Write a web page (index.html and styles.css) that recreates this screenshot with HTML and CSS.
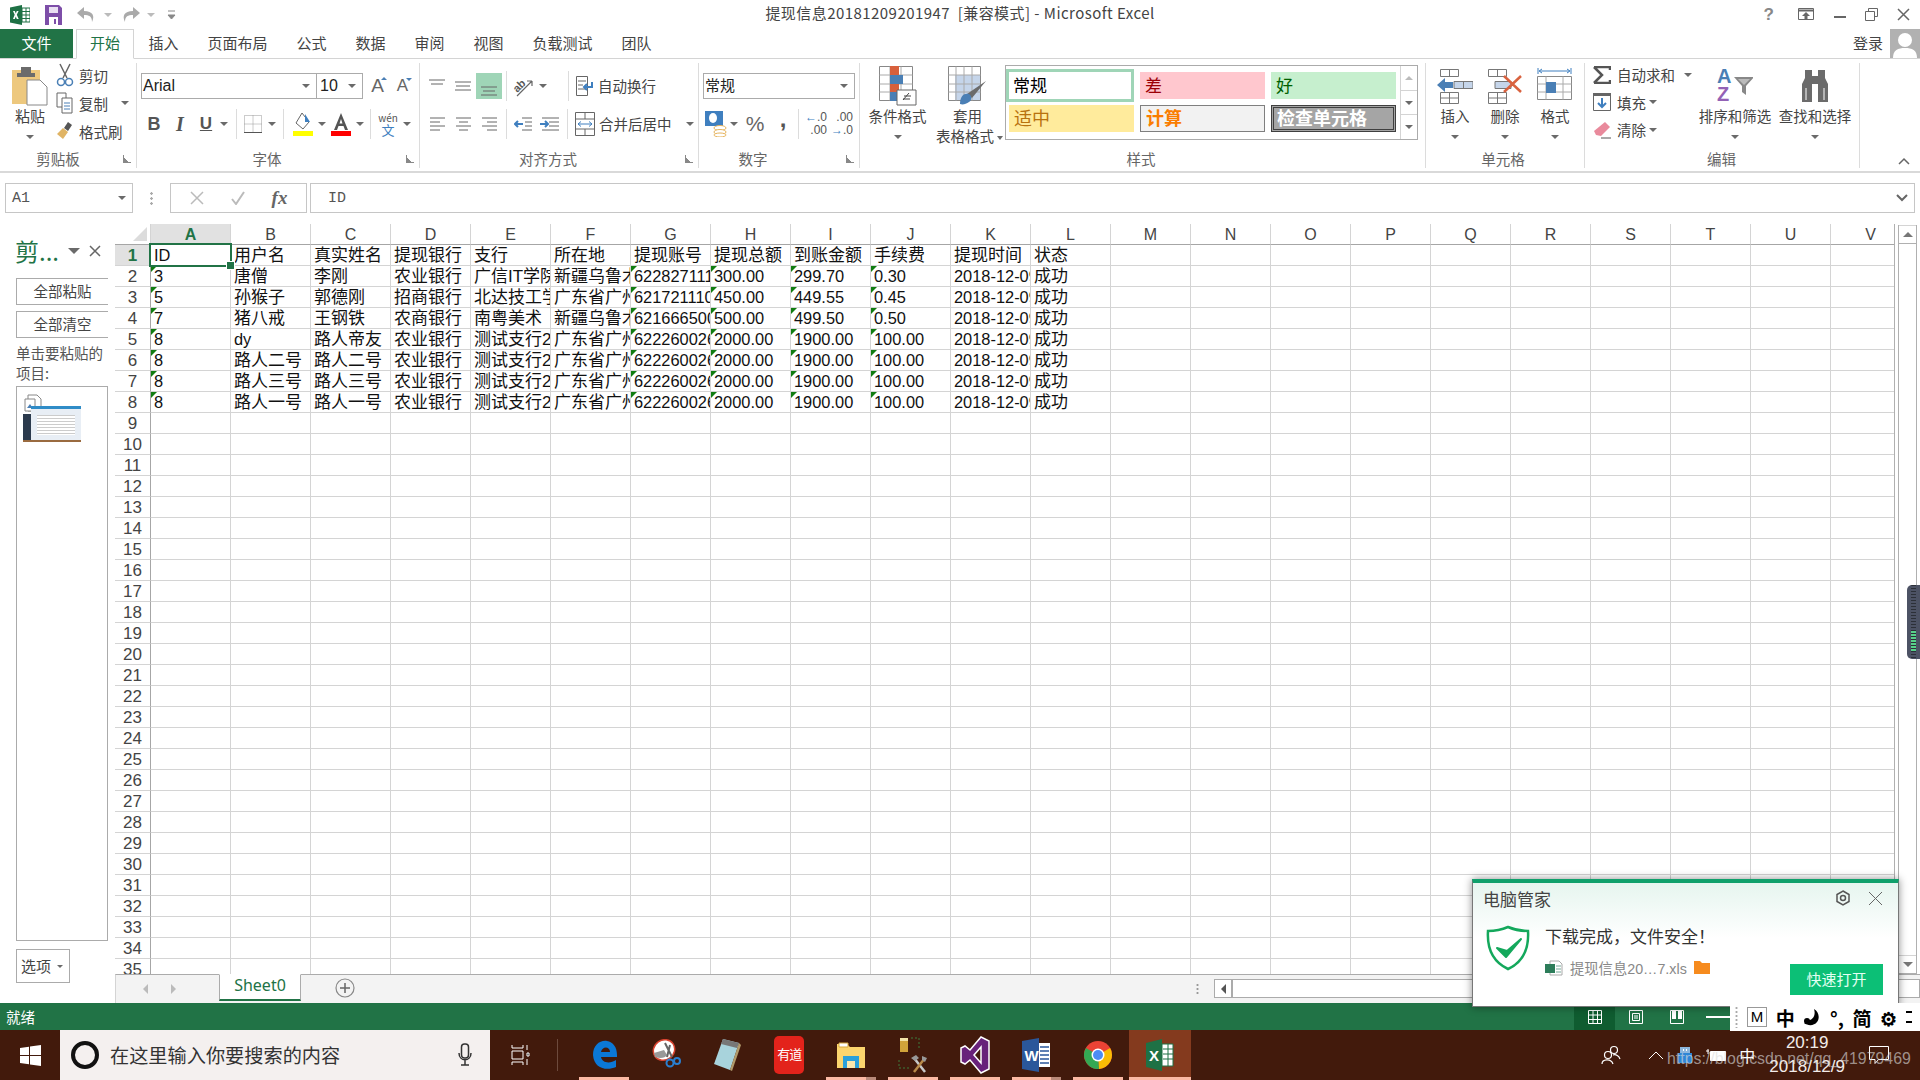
FILE: index.html
```html
<!DOCTYPE html>
<html lang="zh-CN">
<head>
    <meta charset="UTF-8">
    <title>提现信息20181209201947 [兼容模式] - Microsoft Excel</title>
    <link rel="stylesheet" href="styles.css">
</head>
<body>
<svg class="defs" width="0" height="0">
    <symbol id="xl" viewBox="0 0 20 20"><path d="M0 2.5 12 0v20L0 17.5z" fill="#1e7145"/><path d="M12 3h8v14h-8z" fill="#fff" stroke="#1e7145"/><path d="M12 6.5h8M12 10h8M12 13.5h8M16 3v14" stroke="#1e7145"/><path d="M3 6l1.7 3.7L3 14h1.8l1-2.6 1 2.6h1.9L6.8 9.7 8.600 6H6.800l-1 2.400L4.800 6z" fill="#fff"/></symbol>
    <symbol id="lines-t" viewBox="0 0 20 20"><path d="M2 4h16M4 8h12" stroke="#666" fill="none"/></symbol>
    <symbol id="lines-m" viewBox="0 0 20 20"><path d="M2 6h16M3 10h14M2 14h16" stroke="#666" fill="none"/></symbol>
    <symbol id="lines-b" viewBox="0 0 20 20"><path d="M2 11h16M4 15h12M2 19h16" stroke="#666" fill="none"/></symbol>
    <symbol id="al-l" viewBox="0 0 20 20"><path d="M3 4h15M3 8h10M3 12h15M3 16h10" stroke="#666" fill="none"/></symbol>
    <symbol id="al-c" viewBox="0 0 20 20"><path d="M3 4h15M6 8h9M3 12h15M6 16h9" stroke="#666" fill="none"/></symbol>
    <symbol id="al-r" viewBox="0 0 20 20"><path d="M3 4h15M8 8h10M3 12h15M8 16h10" stroke="#666" fill="none"/></symbol>
</svg>

<header class="titlebar">
    <div class="qat">
        <svg class="qat-logo" width="20" height="20"><use href="#xl"/></svg>
        <svg class="qat-save" width="17" height="22" viewBox="0 0 17 22"><path d="M0 1h14l3 3v17H0z" fill="#7d4ea8"/><path d="M4 3h9v6H4z" fill="#e9dff2"/><path d="M4 13h9v8H4z" fill="#fff"/><path d="M9 15h2v5H9z" fill="#7d4ea8"/></svg>
        <svg class="qat-undo" width="22" height="18" viewBox="0 0 22 18"><path d="M8 1 1 7l7 6V9c5 0 8 1 8 7 3-6 1-11-8-11z" fill="#aaa"/></svg>
        <span class="caret faint"></span>
        <svg class="qat-redo" width="22" height="18" viewBox="0 0 22 18"><path d="M14 1l7 6-7 6V9c-5 0-8 1-8 7-3-6-1-11 8-11z" fill="#aaa"/></svg>
        <span class="caret faint"></span>
        <svg class="qat-more" width="9" height="10" viewBox="0 0 9 10"><path d="M1 1h7M1 5h7l-3.5 4z" stroke="#888" fill="#888"/></svg>
    </div>
    <div class="doc-title">提现信息20181209201947&nbsp; [兼容模式] - Microsoft Excel</div>
    <div class="win-btns">
        <span class="help">?</span>
        <svg width="16" height="13" viewBox="0 0 16 13"><path d="M.5.5h15v11H.5z" fill="none" stroke="#666"/><path d="M.5 2.5h15" stroke="#666" stroke-width="2"/><path d="M8 4l-4 4h2.500v4h3V8H12z" fill="#666"/></svg>
        <svg width="13" height="13" viewBox="0 0 13 13"><path d="M1 9h12" stroke="#666" stroke-width="2"/></svg>
        <svg width="13" height="13" viewBox="0 0 13 13"><path d="M3.5 3V.5h9v8H10M.5 3.5h9v9h-9z" fill="none" stroke="#666"/></svg>
        <svg width="13" height="13" viewBox="0 0 13 13"><path d="M1 1l11 11M12 1 1 12" stroke="#666" stroke-width="1.5"/></svg>
    </div>
</header>

<nav class="tabs">
    <span class="tab-file">文件</span>
    <span class="tab active">开始</span>
    <span class="tab">插入</span>
    <span class="tab">页面布局</span>
    <span class="tab">公式</span>
    <span class="tab">数据</span>
    <span class="tab">审阅</span>
    <span class="tab">视图</span>
    <span class="tab">负载测试</span>
    <span class="tab">团队</span>
    <span class="login">登录</span>
    <span class="avatar">
        <svg width="30" height="29" viewBox="0 0 30 29"><circle cx="15" cy="11" r="7" fill="#fff"/><path d="M3 29c0-8 5-10 12-10s12 2 12 10z" fill="#fff"/></svg>
    </span>
</nav>

<section class="ribbon">
    <!-- 剪贴板 -->
    <div class="group g-clip">
        <div class="group-body">
            <div class="big paste">
                <svg width="36" height="40" viewBox="0 0 36 40"><path d="M0 4h28v34H0z" fill="#edc87e"/><path d="M9 1h10v6h4v4H5V7h4z" fill="#6b6b6b"/><path d="M15 14h13l7 7v18H15z" fill="#fff" stroke="#888"/></svg>
                <span class="big-text">粘贴</span>
                <span class="caret big-caret"></span>
            </div>
            <div class="small-col">
                <div class="small-row">
                    <svg width="18" height="24" viewBox="0 0 18 24"><path d="M4 1l7 14M14 1 7 15" stroke="#666" stroke-width="1.5"/><circle cx="5" cy="19" r="3.5" fill="none" stroke="#4a7fb5" stroke-width="1.5"/><circle cx="13" cy="19" r="3.5" fill="none" stroke="#4a7fb5" stroke-width="1.5"/></svg>
                    <span>剪切</span>
                </div>
                <div class="small-row">
                    <svg width="18" height="24" viewBox="0 0 18 24"><path d="M1 2h9v14H1z" fill="#fff" stroke="#666"/><path d="M6 7h10v15H6z" fill="#fff" stroke="#666"/><path d="M8 12h6M8 15h6M8 18h6" stroke="#4a7fb5"/></svg>
                    <span>复制</span><span class="caret tail"></span>
                </div>
                <div class="small-row">
                    <svg width="18" height="22" viewBox="0 0 18 22"><path d="M12 2l4 3-4 6-4-3z" fill="#555"/><path d="M7 8l5 4-5 7-6-5z" fill="#e0b465"/></svg>
                    <span>格式刷</span>
                </div>
            </div>
        </div>
        <div class="group-foot"><i></i><span>剪贴板</span><b class="launcher"></b></div>
    </div>

    <!-- 字体 -->
    <div class="group g-font">
        <div class="group-body column">
            <div class="row-1">
                <div class="combo font-name">Arial<span class="caret"></span></div>
                <div class="combo font-size">10<span class="caret"></span></div>
                <span class="grow-a">A<i class="up"></i></span>
                <span class="grow-a small-a">A<i class="down"></i></span>
            </div>
            <div class="row-2">
                <span class="t glyph bold">B</span>
                <span class="t glyph ital">I</span>
                <span class="t glyph under">U</span>
                <span class="caret w10"></span>
                <span class="vsep sep-font-1"></span>
                <span class="t"><svg width="18" height="18" viewBox="0 0 18 18"><path d="M.5.5h17v17H.5z" fill="none" stroke="#999" stroke-dasharray="1 1"/><path d="M9 .5v17M.5 9h17" stroke="#999" stroke-dasharray="1 1"/><path d="M0 17.5h18" stroke="#555"/></svg></span>
                <span class="caret w12"></span>
                <span class="vsep sep-font-2"></span>
                <span class="t"><svg width="22" height="24" viewBox="0 0 22 24"><path d="M10 1l7 9-6 7-7-6z" fill="#fff" stroke="#666"/><path d="M13 2l5 8h-5z" fill="#3f7fbf"/><path d="M1 19h20v5H1z" fill="#ff0"/></svg></span>
                <span class="caret w12"></span>
                <span class="t"><svg width="22" height="24" viewBox="0 0 22 24"><path d="M11 1 4 18h3l1.500-4h5L15 18h3zM9.500 11.500 11 7l1.500 4.500z" fill="#555"/><path d="M1 19h20v5H1z" fill="#f00"/></svg></span>
                <span class="caret w12"></span>
                <span class="vsep sep-font-3"></span>
                <span class="t wen"><small>wén</small><b>文</b></span>
                <span class="caret w12"></span>
            </div>
        </div>
        <div class="group-foot foot-font"><i></i><span>字体</span><b class="launcher"></b></div>
    </div>

    <!-- 对齐方式 -->
    <div class="group g-align">
        <div class="group-body column">
            <div class="row-1 align-row">
                <span class="t"><svg width="20" height="20"><use href="#lines-t"/></svg></span>
                <span class="t"><svg width="20" height="20"><use href="#lines-m"/></svg></span>
                <span class="t on"><svg width="20" height="20"><use href="#lines-b"/></svg></span>
                <span class="vsep short"></span>
                <span class="t"><svg width="24" height="24" viewBox="0 0 24 24"><text class="orient-ab" x="1" y="15" transform="rotate(-45 8 12)">ab</text><path d="M5 22 20 7M20 7h-5M20 7v5" fill="none" stroke="#666" stroke-width="1.2"/></svg></span>
                <span class="caret w12"></span>
                <span class="vsep short sep-wrap"></span>
                <span class="cmd"><svg width="18" height="22" viewBox="0 0 18 22"><path d="M.5 1.5h11v19H.5z" fill="#fff" stroke="#666"/><path d="M2 6h8M2 10h5M2 14h8" stroke="#666"/><path d="M16 7v5H8m3-3-3 3 3 3" stroke="#3f7fbf" stroke-width="2" fill="none"/></svg><span>自动换行</span></span>
            </div>
            <div class="row-2 align-row">
                <span class="t"><svg width="20" height="20"><use href="#al-l"/></svg></span>
                <span class="t"><svg width="20" height="20"><use href="#al-c"/></svg></span>
                <span class="t"><svg width="20" height="20"><use href="#al-r"/></svg></span>
                <span class="vsep short"></span>
                <span class="t"><svg width="20" height="16" viewBox="0 0 20 16"><path d="M8 2h10M11 6h7M11 10h7M8 14h10" stroke="#666"/><path d="M9 8H1m3-3L1 8l3 3" stroke="#3f7fbf" stroke-width="2" fill="none"/></svg></span>
                <span class="t"><svg width="20" height="16" viewBox="0 0 20 16"><path d="M2 2h17M9 6h10M9 10h10M2 14h17" stroke="#666"/><path d="M0 8h8M5 5l3 3-3 3" stroke="#3f7fbf" stroke-width="2" fill="none"/></svg></span>
                <span class="vsep short"></span>
                <span class="cmd merge"><svg width="20" height="24" viewBox="0 0 20 24"><path d="M.5.5h19v23H.5z" fill="#fff" stroke="#666"/><path d="M.5 7h19M.5 17h19M10 1v6M10 17v6" stroke="#666"/><path d="M3 12h14M6 9.500 3 12l3 2.500M14 9.500l3 2.500-3 2.500" stroke="#3f7fbf" fill="none"/></svg><span>合并后居中</span><span class="caret tail"></span></span>
            </div>
        </div>
        <div class="group-foot foot-align"><i></i><span>对齐方式</span><b class="launcher"></b></div>
    </div>

    <!-- 数字 -->
    <div class="group g-num">
        <div class="group-body column">
            <div class="row-1"><div class="combo num-fmt">常规<span class="caret"></span></div></div>
            <div class="row-2">
                <span class="t"><svg width="22" height="26" viewBox="0 0 22 26"><path d="M0 0h18v15H0z" fill="#3f7fbf"/><ellipse cx="8" cy="7" rx="4" ry="5" fill="#fff"/><ellipse cx="15" cy="17" rx="6" ry="2.500" fill="#fff" stroke="#e6b45e"/><ellipse cx="15" cy="21" rx="6" ry="2.500" fill="#fff" stroke="#e6b45e"/><ellipse cx="15" cy="24" rx="6" ry="2" fill="#fff" stroke="#e6b45e"/></svg></span>
                <span class="caret w10"></span>
                <span class="t glyph pct">%</span>
                <span class="t glyph comma">,</span>
                <span class="vsep sep-num"></span>
                <span class="t dec"><span><i class="arrow">←</i>.0</span><span>.00</span></span>
                <span class="t dec"><span>.00</span><span><i class="arrow">→</i>.0</span></span>
            </div>
        </div>
        <div class="group-foot foot-num"><i></i><span>数字</span><b class="launcher"></b></div>
    </div>

    <!-- 样式 -->
    <div class="group g-style">
        <div class="group-body">
            <div class="big cond">
                <svg width="38" height="40" viewBox="0 0 38 40"><path d="M.5.5h33v34H.5z" fill="#fff" stroke="#888"/><path d="M11 .5v34M22 .5v34M.5 9h33M.5 18h33M.5 26h33" stroke="#aaa"/><path d="M11 0h9v9h-9zM11 18h9v8h-9z" fill="#d8603c"/><path d="M11 9h13v9H11zM11 26h9v9h-9z" fill="#4a7fb5"/><path d="M18 24h19v15H18z" fill="#fff" stroke="#666"/><path d="M24 34l6-7M25 30h7M24 33h7" stroke="#444"/></svg>
                <span class="big-text">条件格式</span>
                <span class="caret big-caret"></span>
            </div>
            <div class="big table-fmt">
                <svg width="40" height="40" viewBox="0 0 40 40"><path d="M.5.5h32v34H.5z" fill="#fff" stroke="#888"/><path d="M7 9h25v25H7z" fill="#c5d5ea"/><path d="M8 .5v34M16 .5v34M24 .5v34M.5 9h32M.5 18h32M.5 26h32" stroke="#aaa"/><path d="M38 15 24 32l-5-4z" fill="#6b6b6b"/><path d="M12 38c0-8 4-11 9-10 3 2 3 6 0 8-3 2-6 3-9 2z" fill="#4a7fb5"/></svg>
                <span class="big-text">套用</span>
                <span class="big-text">表格格式<span class="caret tail-s"></span></span>
            </div>
            <div class="gallery">
                <div class="cell-styles">
                    <span class="cs cs-normal">常规</span>
                    <span class="cs cs-bad">差</span>
                    <span class="cs cs-good">好</span>
                    <span class="cs cs-neutral">适中</span>
                    <span class="cs cs-calc">计算</span>
                    <span class="cs cs-check">检查单元格</span>
                </div>
                <div class="gallery-scroll">
                    <span><i class="caret-up"></i></span>
                    <span><i class="caret"></i></span>
                    <span><i class="caret more"></i></span>
                </div>
            </div>
        </div>
        <div class="group-foot plain foot-style"><span>样式</span></div>
    </div>

    <!-- 单元格 -->
    <div class="group g-cells">
        <div class="group-body">
            <div class="big col50">
                <svg width="36" height="36" viewBox="0 0 36 36"><path d="M3.5 1.500h18v7h-18zM12.500 1.500v7M3.500 24.500h18v11h-18zM12.500 24.500v11M3.500 30h18" fill="#fff" stroke="#777"/><path d="M17 13.500h19v7H17z" fill="#c5d5ea" stroke="#777"/><path d="M26.500 13.500v7" stroke="#777"/><path d="M0 17l8-7v4h8v6H8v4z" fill="#4a7fb5"/></svg>
                <span class="big-text">插入</span>
                <span class="caret big-caret"></span>
            </div>
            <div class="big col50">
                <svg width="36" height="36" viewBox="0 0 36 36"><path d="M1.5 1.500h18v7h-18zM10.500 1.500v7M1.500 24.500h18v11h-18zM10.500 24.500v11M1.500 30h18" fill="#fff" stroke="#777"/><path d="M8 13.500h16v7H8z" fill="#c5d5ea" stroke="#777"/><path d="M17 8 34 24M34 8 17 24" stroke="#d9623f" stroke-width="2.5"/></svg>
                <span class="big-text">删除</span>
                <span class="caret big-caret"></span>
            </div>
            <div class="big col50">
                <svg width="36" height="36" viewBox="0 0 36 36"><path d="M1 0v6M34 0v6M3 3h29M5 1 2 3l3 2M30 1l3 2-3 2" stroke="#3f7fbf" fill="none"/><path d="M.5 8.500h34v23H.5z" fill="#fff" stroke="#888"/><path d="M9 8.500v23M26 8.500v23M.5 16h34M.5 24h34" stroke="#aaa"/><path d="M9 14h10v11H9z" fill="#4a7fb5"/></svg>
                <span class="big-text">格式</span>
                <span class="caret big-caret"></span>
            </div>
        </div>
        <div class="group-foot plain foot-cells"><span>单元格</span></div>
    </div>

    <!-- 编辑 -->
    <div class="group g-edit">
        <div class="group-body">
            <div class="small-col edit-col">
                <div class="small-row">
                    <svg width="18" height="18" viewBox="0 0 18 18"><path d="M1 1h16v3M1 17h16v-3M1 1l8 8-8 8" fill="none" stroke="#555" stroke-width="2.5"/></svg>
                    <span>自动求和</span><span class="caret tail"></span>
                </div>
                <div class="small-row">
                    <svg width="18" height="18" viewBox="0 0 18 18"><path d="M.5.5h17v17H.5z" fill="#fff" stroke="#666"/><path d="M0 0h18v3H0z" fill="#666"/><path d="M9 5v9M5 10l4 4 4-4" stroke="#3f7fbf" stroke-width="2" fill="none"/></svg>
                    <span>填充</span><span class="caret inline"></span>
                </div>
                <div class="small-row">
                    <svg width="18" height="18" viewBox="0 0 18 18"><path d="M12 1l5 5-9 9-5-1-2-4z" fill="#e98a9c"/><path d="M8 17h10" stroke="#555"/></svg>
                    <span>清除</span><span class="caret inline"></span>
                </div>
            </div>
            <div class="big col80">
                <svg width="36" height="36" viewBox="0 0 36 36"><path d="M17 9h20l-8 9v9l-4-3v-6z" fill="#888"/><path d="M21 11h12l-6 6z" fill="#bbb"/></svg>
                <span class="sort-letters"><b class="az-a">A</b><b class="az-z">Z</b></span>
                <span class="big-text">排序和筛选</span>
                <span class="caret big-caret"></span>
            </div>
            <div class="big col80">
                <svg width="34" height="32" viewBox="0 0 34 32"><path d="M7 0h7v6h6V0h7v8l3 6v18H20V14h-6v18H4V14l3-6z" fill="#6b6b6b"/><path d="M8 18v12M26 18v12" stroke="#fff"/></svg>
                <span class="big-text">查找和选择</span>
                <span class="caret big-caret"></span>
            </div>
        </div>
        <div class="group-foot plain foot-edit"><span>编辑</span></div>
    </div>

    <svg class="collapse" width="12" height="8" viewBox="0 0 12 8"><path d="M1 7l5-5 5 5" fill="none" stroke="#666" stroke-width="1.5"/></svg>
</section>

<div class="formula-bar">
    <div class="name-box">A1<span class="caret"></span></div>
    <div class="fx-dots"></div>
    <div class="fx-btns">
        <svg width="14" height="14" viewBox="0 0 14 14"><path d="M1 1l12 12M13 1 1 13" stroke="#bbb" stroke-width="1.5"/></svg>
        <svg width="14" height="14" viewBox="0 0 14 14"><path d="M1 8l4 5 8-12" fill="none" stroke="#bbb" stroke-width="2"/></svg>
        <span class="fx">fx</span>
    </div>
    <div class="fx-input">ID
        <svg width="12" height="8" viewBox="0 0 12 8"><path d="M1 1l5 5 5-5" fill="none" stroke="#666" stroke-width="2"/></svg>
    </div>
</div>

<main class="workspace">
    <aside class="clip-pane">
        <div class="pane-head">
            <span class="pane-title">剪...</span>
            <span class="caret pane-caret"></span>
            <svg width="12" height="12" viewBox="0 0 12 12"><path d="M1 1l10 10M11 1 1 11" stroke="#666" stroke-width="1.5"/></svg>
        </div>
        <div class="pane-btn">全部粘贴</div>
        <div class="pane-btn">全部清空</div>
        <p class="pane-tip">单击要粘贴的<br>项目:</p>
        <div class="pane-list">
            <svg class="thumb-icon" width="18" height="20" viewBox="0 0 18 20"><path d="M4 1h9l4 4v12H4z" fill="#fff" stroke="#888"/><path d="M1 5h10v12H1z" fill="#fff" stroke="#888"/><path d="M3 14l3-4 2 3 1-1 2 2z" fill="#4a7fb5"/></svg>
            <div class="thumb"><div class="thumb-left"></div><div class="thumb-main"></div></div>
        </div>
        <div class="pane-options">选项<span class="caret"></span></div>
    </aside>

    <div class="sheet-wrap">
        <div class="sheet-scroll">
            <div class="sheet">
                <div class="ch corner"></div>
                <div class="ch sel">A</div><div class="ch">B</div><div class="ch">C</div><div class="ch">D</div><div class="ch">E</div><div class="ch">F</div><div class="ch">G</div><div class="ch">H</div><div class="ch">I</div><div class="ch">J</div><div class="ch">K</div><div class="ch">L</div><div class="ch">M</div><div class="ch">N</div><div class="ch">O</div><div class="ch">P</div><div class="ch">Q</div><div class="ch">R</div><div class="ch">S</div><div class="ch">T</div><div class="ch">U</div><div class="ch">V</div>

                <div class="rh sel">1</div>
                <div class="c active d">ID</div><div class="c">用户名</div><div class="c">真实姓名</div><div class="c">提现银行</div><div class="c">支行</div><div class="c">所在地</div><div class="c">提现账号</div><div class="c">提现总额</div><div class="c">到账金额</div><div class="c">手续费</div><div class="c">提现时间</div><div class="c">状态</div>

                <div class="rh">2</div>
                <div class="c n">3</div><div class="c">唐僧</div><div class="c">李刚</div><div class="c">农业银行</div><div class="c">广信IT学院</div><div class="c">新疆乌鲁木齐</div><div class="c n">6228271117</div><div class="c n">300.00</div><div class="c n">299.70</div><div class="c n">0.30</div><div class="c d">2018-12-09</div><div class="c">成功</div>

                <div class="rh">3</div>
                <div class="c n">5</div><div class="c">孙猴子</div><div class="c">郭德刚</div><div class="c">招商银行</div><div class="c">北达技工学校</div><div class="c">广东省广州</div><div class="c n">6217211100</div><div class="c n">450.00</div><div class="c n">449.55</div><div class="c n">0.45</div><div class="c d">2018-12-09</div><div class="c">成功</div>

                <div class="rh">4</div>
                <div class="c n">7</div><div class="c">猪八戒</div><div class="c">王钢铁</div><div class="c">农商银行</div><div class="c">南粤美术</div><div class="c">新疆乌鲁木齐</div><div class="c n">6216665000</div><div class="c n">500.00</div><div class="c n">499.50</div><div class="c n">0.50</div><div class="c d">2018-12-09</div><div class="c">成功</div>

                <div class="rh">5</div>
                <div class="c n">8</div><div class="c d">dy</div><div class="c">路人帝友</div><div class="c">农业银行</div><div class="c">测试支行2</div><div class="c">广东省广州</div><div class="c n">6222600260</div><div class="c n">2000.00</div><div class="c n">1900.00</div><div class="c n">100.00</div><div class="c d">2018-12-09</div><div class="c">成功</div>

                <div class="rh">6</div>
                <div class="c n">8</div><div class="c">路人二号</div><div class="c">路人二号</div><div class="c">农业银行</div><div class="c">测试支行2</div><div class="c">广东省广州</div><div class="c n">6222600260</div><div class="c n">2000.00</div><div class="c n">1900.00</div><div class="c n">100.00</div><div class="c d">2018-12-09</div><div class="c">成功</div>

                <div class="rh">7</div>
                <div class="c n">8</div><div class="c">路人三号</div><div class="c">路人三号</div><div class="c">农业银行</div><div class="c">测试支行2</div><div class="c">广东省广州</div><div class="c n">6222600260</div><div class="c n">2000.00</div><div class="c n">1900.00</div><div class="c n">100.00</div><div class="c d">2018-12-09</div><div class="c">成功</div>

                <div class="rh">8</div>
                <div class="c n">8</div><div class="c">路人一号</div><div class="c">路人一号</div><div class="c">农业银行</div><div class="c">测试支行2</div><div class="c">广东省广州</div><div class="c n">6222600260</div><div class="c n">2000.00</div><div class="c n">1900.00</div><div class="c n">100.00</div><div class="c d">2018-12-09</div><div class="c">成功</div>

                <div class="rh">9</div><div class="rh">10</div><div class="rh">11</div><div class="rh">12</div><div class="rh">13</div><div class="rh">14</div><div class="rh">15</div><div class="rh">16</div><div class="rh">17</div><div class="rh">18</div><div class="rh">19</div><div class="rh">20</div><div class="rh">21</div><div class="rh">22</div><div class="rh">23</div><div class="rh">24</div><div class="rh">25</div><div class="rh">26</div><div class="rh">27</div><div class="rh">28</div><div class="rh">29</div><div class="rh">30</div><div class="rh">31</div><div class="rh">32</div><div class="rh">33</div><div class="rh">34</div><div class="rh">35</div>
            </div>
            <div class="vscroll">
                <span class="vs-btn"><i class="caret-up"></i></span>
                <span class="vs-btn"><i class="caret"></i></span>
            </div>
        </div>
        <div class="sheet-tabs">
            <span class="nav-arrow left"></span>
            <span class="nav-arrow right"></span>
            <span class="sheet-tab">Sheet0</span>
            <span class="add-sheet">
                <svg width="20" height="20" viewBox="0 0 20 20"><circle cx="10" cy="10" r="9" fill="none" stroke="#888" stroke-width="1.2"/><path d="M10 5v10M5 10h10" stroke="#666" stroke-width="1.5"/></svg>
            </span>
            <span class="tab-dots"></span>
            <span class="hscroll-left"><i></i></span>
            <span class="hscroll-thumb"></span>
        </div>
    </div>
    <div class="side-handle"></div>
</main>

<footer class="status">
    <span>就绪</span>
    <div class="views">
        <span class="view on"><svg width="14" height="14" viewBox="0 0 14 14"><path d="M.5.5h13v13H.5zM5 .5v13M9.500.5v13M.5 5h13M.5 9.500h13" fill="none" stroke="#fff"/></svg></span>
        <span class="view"><svg width="14" height="14" viewBox="0 0 14 14"><path d="M.5.5h13v13H.5z" fill="none" stroke="#fff"/><path d="M3.500 3.500h7v7h-7zM5 6h4M5 8h4" fill="none" stroke="#fff"/></svg></span>
        <span class="view"><svg width="14" height="14" viewBox="0 0 14 14"><path d="M.5.5h13v13H.5z" fill="none" stroke="#fff"/><path d="M2 1h4v8H2zM8 1h4v8H8z" fill="#fff"/></svg></span>
        <span class="zoom-dash"></span>
    </div>
</footer>

<div class="taskbar">
    <span class="start">
        <svg width="21" height="21" viewBox="0 0 21 21"><path d="M0 3l9-1.300V10H0zM10 1.500 21 0v10H10zM0 11h9v8.300L0 18zM10 11h11v10l-11-1.500z" fill="#fff"/></svg>
    </span>
    <div class="search">
        <span class="cortana"></span>
        <span class="search-text">在这里输入你要搜索的内容</span>
        <svg width="14" height="24" viewBox="0 0 14 24"><rect x="3.5" y="1" width="7" height="14" rx="3" fill="none" stroke="#333" stroke-width="1.5"/><path d="M1 10c0 9 12 9 12 0M7 17v5M3 22h8" fill="none" stroke="#333" stroke-width="1.5"/></svg>
    </div>
    <span class="task-view">
        <svg width="20" height="22" viewBox="0 0 20 22"><path d="M2 1v3h11V1M2 21v-3h11v3M2 7h11v8H2z" fill="none" stroke="#fff"/><path d="M17 1v5M17 9h2v3h-2zM17 15v6" stroke="#fff"/></svg>
    </span>
    <span class="task-sep"></span>
    <div class="apps">
        <span class="app run">
            <svg width="26" height="30" viewBox="0 0 26 30"><path d="M2 15C2 5 9 0 16 1c6 1 10 6 10 14v2H10c1 6 9 7 15 3v7c-9 4-22 2-23-12zm8-3h9c0-6-8-6-9 0z" fill="#0b78d7"/></svg>
        </span>
        <span class="app">
            <svg width="30" height="32" viewBox="0 0 30 32"><ellipse cx="13" cy="11" rx="11" ry="10" fill="#fff" stroke="#d8432f" stroke-width="1.5" transform="rotate(-35 13 11)"/><path d="M4 18c6 2 10 1 12-2l-3-5-10 3z" fill="#999"/><path d="M14 4l7 14M19 6 16 18" stroke="#666" stroke-width="2"/><circle cx="19" cy="24" r="3.5" fill="none" stroke="#2a7fd0" stroke-width="2"/><circle cx="26" cy="22" r="3" fill="none" stroke="#2a7fd0" stroke-width="2"/></svg>
        </span>
        <span class="app">
            <svg width="28" height="34" viewBox="0 0 28 34"><path d="M10 1l16 4-9 27L1 26z" fill="#a8d3dc"/><path d="M10 1l16 4-2 5L8 6z" fill="#777"/><path d="M17 32l9-27 2 2-9 26z" fill="#b19a6b"/></svg>
        </span>
        <span class="app"><span class="youdao">有道</span></span>
        <span class="app run-split">
            <svg width="28" height="26" viewBox="0 0 28 26"><path d="M0 2h10l3 3h15v21H0z" fill="#fbd56e"/><path d="M2 1h9v4H2z" fill="#fff" stroke="#d9a93d"/><path d="M6 14h16v12h-4v-7h-8v7H6z" fill="#2aa0da"/><path d="M10 19h8v7h-8z" fill="#fbe8ad"/></svg>
        </span>
        <span class="app run">
            <svg width="30" height="38" viewBox="0 0 30 38"><path d="M2 2h8v14H2z" fill="#d1a33a"/><path d="M2 2h8v3H2z" fill="#f2e2a7"/><path d="M13 2h8v12M1 24v8h10" fill="none" stroke="#3c7a3c" stroke-dasharray="2 2"/><path d="M16 22l11 14" stroke="#c9c9c9" stroke-width="2.5"/><path d="M27 22 16 36" stroke="#b98a4a" stroke-width="2.5"/><path d="M13 22l5-3 3 3-4 3zM24 20l5 2-2 4-3-2z" fill="#999"/></svg>
        </span>
        <span class="app run">
            <svg width="30" height="38" viewBox="0 0 30 38"><path d="M21 1l8 4v28l-8 4-11-13-5 4-4-2V12l4-2 5 4zM21 11l-7 8 7 8z" fill="#68217a" stroke="#fff" stroke-width="1.5"/></svg>
        </span>
        <span class="app run-split">
            <svg width="28" height="34" viewBox="0 0 28 34"><path d="M0 3l17-3v34l-17-3z" fill="#2b579a"/><path d="M17 5h11v24H17z" fill="#fff"/><path d="M18 9h9M18 13h9M18 17h9M18 21h9M18 25h9" stroke="#2b579a" stroke-width="1.5"/><text class="w-mark" x="2.5" y="23">W</text></svg>
        </span>
        <span class="app run">
            <svg width="28" height="28" viewBox="0 0 28 28"><circle cx="14" cy="14" r="14" fill="#ea4335"/><path d="M14 14 26.100 7A14 14 0 0 1 15 28z" fill="#fbbc05"/><path d="M14 14 15 28A14 14 0 0 1 2 7z" fill="#34a853"/><circle cx="14" cy="14" r="6.5" fill="#fff"/><circle cx="14" cy="14" r="5" fill="#4d8cf5"/></svg>
        </span>
        <span class="app current">
            <svg width="28" height="32" viewBox="0 0 28 32"><path d="M0 4l16-4v32l-16-4z" fill="#1e7145"/><path d="M16 5h11v22H16z" fill="#fff" stroke="#1e7145"/><path d="M17 10h10M17 15h10M17 20h10M22 5v22" stroke="#1e7145"/><text class="x-mark" x="3" y="22">X</text></svg>
        </span>
    </div>
    <div class="tray">
        <svg class="people" width="20" height="20" viewBox="0 0 20 20"><circle cx="13" cy="5" r="3.5" fill="none" stroke="#fff" stroke-width="1.2"/><circle cx="7" cy="10" r="3.5" fill="none" stroke="#fff" stroke-width="1.2"/><path d="M1 19c0-5 9-6 11 0M12 10c3-1 6 1 7 4" fill="none" stroke="#fff" stroke-width="1.2"/></svg>
        <svg width="16" height="9" viewBox="0 0 16 9"><path d="M1 8l7-7 7 7" fill="none" stroke="#fff"/></svg>
        <svg width="16" height="18" viewBox="0 0 16 18"><path d="M3 1h10v6H3z" fill="#8db6dd"/><path d="M1 7h14v10H1z" fill="#2f86d6"/><path d="M6 3h1v2H6zM9 3h1v2H9z" fill="#fff"/></svg>
        <svg width="20" height="13" viewBox="0 0 20 13"><path d="M4.500 2.500h15v9h-15z" fill="#fff" stroke="#fff"/><path d="M0 2h3M2 0v5" stroke="#fff"/></svg>
        <span class="tray-lang">中</span>
        <span class="clock">20:19<br>2018/12/9</span>
        <svg class="notify" width="20" height="18" viewBox="0 0 20 18"><path d="M.5.5h19v13h-10L6 17.500v-4H.5z" fill="none" stroke="#fff"/></svg>
    </div>
</div>

<!-- overlays -->
<aside class="toast">
    <div class="toast-head">
        <span>电脑管家</span>
        <svg width="16" height="16" viewBox="0 0 16 16"><path d="M8 1l6 3.500v7L8 15l-6-3.500v-7z" fill="none" stroke="#555" stroke-width="1.5"/><circle cx="8" cy="8" r="2.5" fill="none" stroke="#555" stroke-width="1.5"/></svg>
        <svg width="15" height="15" viewBox="0 0 15 15"><path d="M1 1l13 13M14 1 1 14" stroke="#666"/></svg>
    </div>
    <div class="toast-body">
        <svg width="44" height="46" viewBox="0 0 44 46"><path d="M22 2c7 3 13 4 20 4 1 16-3 30-20 38C5 36 1 22 2 6c7 0 13-1 20-4z" fill="#fff" stroke="#14a85c" stroke-width="2.5"/><path d="M11 23l9 9 15-18-14 12z" fill="#14a85c" stroke="#14a85c" stroke-linejoin="round" stroke-width="2"/></svg>
        <div class="toast-text">
            <div class="toast-msg">下载完成，文件安全！</div>
            <div class="toast-file">
                <svg width="18" height="16" viewBox="0 0 18 16"><path d="M5 1h9l3 3v11H5z" fill="#fff" stroke="#aaa"/><path d="M0 4h10v9H0z" fill="#2d7d5a"/><path d="M11 6h5M11 9h5M11 12h5" stroke="#7a9"/></svg>
                <span>提现信息20…7.xls</span>
                <svg width="16" height="13" viewBox="0 0 16 13"><path d="M0 0h6l2 2h8v11H0z" fill="#f68b1e"/></svg>
            </div>
        </div>
        <div class="toast-btn">快速打开</div>
    </div>
</aside>

<div class="ime">
    <span class="ime-m">M</span>
    <span>中</span>
    <svg width="18" height="18" viewBox="0 0 18 18"><path d="M11 1c5 3 6 9 3 13s-9 4-13 1c3 0 3-3 6-3 3-1 6-5 4-11z" fill="#000"/><circle cx="4" cy="13" r="3" fill="#000"/></svg>
    <span>°,</span>
    <span>简</span>
    <span>⚙</span>
    <span class="ime-more"></span>
</div>

<div class="watermark">https://blog.csdn.net/qq_41979469</div>
</body>
</html>
```

FILE: styles.css
```css
* {
    box-sizing: border-box;
}

html, body {
    margin: 0;
    height: 100%;
}

body {
    width: 1920px;
    height: 1080px;
    overflow: hidden;
    display: flex;
    flex-direction: column;
    position: relative;
    background-color: white;
    color: #444;
    font-family: "Noto Sans CJK SC", "Noto Sans", sans-serif;
    font-size: 14.5px;
    white-space: nowrap;
}

.defs {
    position: absolute;
}

svg {
    flex: none;
    display: block;
}

.caret {
    display: inline-block;
    flex: none;
    width: 0;
    height: 0;
    border-left: 4px solid transparent;
    border-right: 4px solid transparent;
    border-top: 4px solid #6a6a6a;
}

.caret.faint {
    border-top-color: #bbb;
}

.caret-up {
    display: inline-block;
    width: 0;
    height: 0;
    border-left: 4px solid transparent;
    border-right: 4px solid transparent;
    border-bottom: 4px solid #bbb;
}

/* title bar */
.titlebar {
    height: 29px;
    flex: none;
    display: grid;
    grid-template-columns: 1fr auto 1fr;
    align-items: center;
}

.qat {
    display: flex;
    align-items: center;
    padding-left: 10px;
}

.qat-save { margin-left: 15px; }
.qat-undo { margin-left: 14px; }
.qat .caret { margin-left: 6px; }
.qat-redo { margin-left: 7px; }
.qat-more { margin-left: 12px; }

.doc-title {
    font-size: 15px;
    letter-spacing: 0.45px;
    line-height: 26px;
    height: 29px;
    color: #444;
}

.win-btns {
    display: flex;
    align-items: center;
    justify-content: flex-end;
    gap: 19px;
    padding-right: 10px;
}

.help {
    font-family: "Liberation Sans", sans-serif;
    font-weight: bold;
    font-size: 17px;
    color: #888;
    margin-right: 5px;
}

/* tabs */
.tabs {
    height: 30px;
    flex: none;
    display: flex;
    align-items: stretch;
    border-bottom: 1px solid #d4d4d4;
    font-size: 15px;
}

.tab-file {
    width: 73px;
    background-color: #217346;
    color: white;
    text-align: center;
    line-height: 27px;
}

.tab {
    padding: 0 14.5px;
    line-height: 27px;
}

.tab.active {
    width: 58px;
    margin-left: 3px;
    padding: 0;
    text-align: center;
    color: #217346;
    background-color: white;
    border: 1px solid #d4d4d4;
    border-bottom: 1px solid white;
    height: 30px;
    line-height: 25px;
}

.login {
    margin-left: auto;
    line-height: 27px;
}

.avatar {
    width: 30px;
    margin-left: 7px;
    background-color: #b1b1b1;
    overflow: hidden;
}

/* ribbon */
.ribbon {
    height: 114px;
    flex: none;
    display: flex;
    padding-top: 4px;
    border-bottom: 2px solid #d9d9d9;
}

.group {
    height: 105px;
    display: flex;
    flex-direction: column;
    border-right: 1px solid #dcdcdc;
}

.g-clip { width: 137px; }
.g-font { width: 283px; padding-left: 4px; }
.g-align { width: 279px; padding-left: 4px; }
.g-num { width: 161px; padding-left: 4px; }
.g-style { width: 566px; padding-left: 5px; }
.g-cells { width: 159px; padding-left: 4px; }
.g-edit { width: 275px; padding-left: 5px; }

.group-body {
    height: 87px;
    display: flex;
}

.group-body.column {
    flex-direction: column;
}

.group-foot {
    height: 18px;
    display: grid;
    grid-template-columns: 18px 1fr 18px;
    align-items: center;
    text-align: center;
    color: #666;
    line-height: 18px;
}

.group-foot > span {
    padding-right: 20px;
}

.foot-font > span { padding-right: 26px; }
.foot-align > span { padding-right: 26px; }
.foot-num > span { padding-right: 56px; }
.foot-style > span { padding-right: 0; display: block; transform: translateX(-4px); }
.foot-cells > span { padding-right: 0; display: block; transform: translateX(-4px); }
.foot-edit > span { padding-right: 0; display: block; transform: translateX(-3px); }

.group-foot.plain {
    display: block;
}

.launcher {
    width: 8px;
    height: 8px;
    margin-left: 5px;
    border-left: 1px solid #888;
    border-bottom: 1px solid #888;
    background: linear-gradient(45deg, #888 0 30%, transparent 30%);
}

.big {
    display: flex;
    flex-direction: column;
    align-items: center;
    padding-top: 3px;
}

.big svg {
    height: 40px;
}

.big-text {
    height: 18px;
    line-height: 18px;
    margin-top: 1px;
}

.big-text + .big-text {
    margin-top: 2px;
}

.big-caret {
    margin-top: 10px;
}

.paste {
    width: 56px;
    padding-left: 4px;
}

.paste .big-text {
    font-size: 15px;
}

.small-col {
    display: flex;
    flex-direction: column;
    margin-top: -2px;
}

.small-row {
    height: 28px;
    display: flex;
    align-items: center;
    gap: 5px;
}

.tail {
    margin-left: 8px;
}

.inline {
    margin-left: -3px;
}

.tail-s {
    border-left-width: 3.5px;
    border-right-width: 3.5px;
    margin-left: 3px;
    vertical-align: middle;
}

.row-1 {
    margin-top: 10px;
    height: 26px;
    display: flex;
    align-items: center;
}

.row-2 {
    margin-top: 13px;
    height: 24px;
    display: flex;
    align-items: center;
}

.combo {
    height: 26px;
    border: 1px solid #ababab;
    display: flex;
    align-items: center;
    justify-content: space-between;
    padding: 0 6px 0 1px;
    color: #222;
    font-size: 16px;
}

.font-name {
    width: 176px;
    font-family: "Liberation Sans", sans-serif;
}

.font-size {
    width: 46px;
    border-left: 0;
    padding-left: 3px;
    font-family: "Liberation Sans", sans-serif;
}

.num-fmt {
    width: 152px;
    font-size: 15px;
    line-height: 22px;
    align-items: flex-start;
}

.num-fmt .caret {
    margin-top: 10px;
}

.grow-a {
    width: 25px;
    text-align: center;
    font-family: "Liberation Sans", sans-serif;
    font-size: 19px;
    color: #666;
    position: relative;
    margin-left: 2px;
}

.small-a {
    font-size: 17px;
    margin-left: 0;
}

.grow-a i {
    position: absolute;
    right: 3px;
    top: 2px;
    border-left: 3px solid transparent;
    border-right: 3px solid transparent;
}

.grow-a .up { border-bottom: 3px solid #4a7fb5; }
.grow-a .down { border-top: 3px solid #4a7fb5; }

.t {
    width: 26px;
    height: 26px;
    flex: none;
    display: flex;
    align-items: center;
    justify-content: center;
}

.t.on {
    background-color: #9fd5b7;
}

.glyph {
    font-family: "Liberation Sans", sans-serif;
    font-size: 18px;
    color: #555;
}

.bold { font-weight: bold; }
.ital { font-style: italic; font-family: "Liberation Serif", serif; font-weight: bold; font-size: 20px; }
.under { text-decoration: underline; font-weight: bold; font-size: 17px; }
.pct { font-size: 21px; color: #666; margin-left: 3px; }
.comma { font-size: 24px; font-weight: bold; padding-bottom: 10px; margin-left: 2px; }

.wen {
    flex-direction: column;
    color: #3f7fbf;
    line-height: 1;
}

.wen small {
    font-size: 10px;
    color: #555;
}

.wen b {
    font-weight: normal;
    font-size: 13px;
}

.w10 { margin: 0 1px; }
.w12 { margin: 0 2px; }

.vsep {
    width: 1px;
    height: 30px;
    flex: none;
    background-color: #dcdcdc;
}

.vsep.short {
    margin: 0 4px 0 4px;
}

.sep-font-1 { margin: 0 3px 0 7px; }
.sep-font-2 { margin: 0 6px 0 5px; }
.sep-font-3 { margin: 0 4px; }
.sep-num { margin: 0 2px 0 2px; }
.vsep.sep-wrap { margin-left: 19px; margin-right: 4px; }

.orient-ab {
    font-family: "Liberation Sans", sans-serif;
    font-size: 11px;
    font-weight: bold;
    fill: #555;
}

.cmd {
    display: flex;
    align-items: center;
    gap: 4px;
    margin-left: 3px;
}

.cmd > span:first-of-type {
    position: relative;
    top: -1px;
}

.merge .tail {
    margin-left: 10px;
}

.dec {
    flex-direction: column;
    font-family: "Liberation Sans", sans-serif;
    font-size: 12px;
    line-height: 13px;
    color: #555;
    width: 26px;
    align-items: flex-end;
}

.dec .arrow {
    color: #3f7fbf;
    font-style: normal;
    font-weight: bold;
}

.cond { width: 65px; }
.table-fmt { width: 75px; }

.table-fmt .big-text + .big-text {
    margin-left: 4px;
}

.gallery {
    width: 413px;
    height: 75px;
    margin-top: 2px;
    border: 1px solid #ababab;
    display: flex;
}

.cell-styles {
    width: 394px;
    padding: 6px 0 0 3px;
    display: grid;
    grid-template-columns: repeat(3, 125px);
    grid-template-rows: repeat(2, 27px);
    gap: 6px;
}

.cs {
    display: flex;
    align-items: center;
    padding: 0 0 3px 5px;
    font-size: 17px;
    line-height: 1;
}

.cs-normal {
    color: black;
    border: 3px solid #9fd5b7;
    padding-left: 4px;
    margin: -3px;
    margin-right: 0;
}

.cs-bad { background-color: #ffc7ce; color: #9c0006; }
.cs-good { background-color: #c6efce; color: #006100; }
.cs-neutral { background-color: #ffeb9c; color: #b8720e; font-size: 18px; }
.cs-calc { background-color: #f2f2f2; border: 1px solid #7f7f7f; color: #fa7d00; font-size: 18px; font-weight: bold; padding-left: 5px; }
.cs-check { background-color: #a5a5a5; border: 3px double #3f3f3f; color: white; font-size: 18px; font-weight: bold; padding-left: 3px; }

.gallery-scroll {
    flex: 1;
    display: flex;
    flex-direction: column;
    border-left: 1px solid #d4d4d4;
}

.gallery-scroll span {
    flex: 1;
    display: flex;
    align-items: center;
    justify-content: center;
    border-bottom: 1px solid #d4d4d4;
}

.gallery-scroll span:last-child {
    border-bottom: 0;
}

.col50 { width: 50px; }
.col80 { width: 80px; position: relative; }

.edit-col {
    width: 105px;
    padding-left: 3px;
}

.edit-col .small-row {
    gap: 6px;
    height: 27.5px;
}

.edit-col .tail {
    margin-left: 3px;
}

.sort-letters {
    position: absolute;
    left: 22px;
    top: 4px;
    font-family: "Liberation Sans", sans-serif;
    font-size: 20px;
    line-height: 18px;
    display: flex;
    flex-direction: column;
}

.az-a { color: #4a7fb5; }
.az-z { color: #9362b5; }

.collapse {
    margin: 94px 0 0 38px;
}

/* formula bar */
.formula-bar {
    height: 51px;
    flex: none;
    display: flex;
    align-items: flex-start;
    padding: 10px 5px 0;
}

.name-box, .fx-btns, .fx-input {
    height: 30px;
    border: 1px solid #c6c6c6;
    display: flex;
    align-items: center;
    background-color: white;
}

.name-box {
    width: 128px;
    justify-content: space-between;
    padding: 0 6px;
    font-family: "Liberation Mono", monospace;
    font-size: 15px;
    color: #555;
}

.fx-dots {
    width: 37px;
    height: 14px;
    margin-top: 8px;
    background: radial-gradient(circle, #aaa 1px, transparent 1.5px) center top / 3px 5px repeat-y;
}

.fx-btns {
    width: 137px;
    justify-content: space-around;
    padding: 0 5px;
}

.fx {
    font-family: "Liberation Serif", serif;
    font-style: italic;
    font-weight: bold;
    font-size: 19px;
    color: #666;
}

.fx-input {
    flex: 1;
    margin-left: 3px;
    padding: 0 6px 0 17px;
    justify-content: space-between;
    font-family: "Liberation Mono", monospace;
    font-size: 15px;
    color: #555;
}

/* workspace */
.workspace {
    height: 779px;
    flex: none;
    display: flex;
}

.clip-pane {
    width: 115px;
    flex: none;
    padding-left: 16px;
    display: flex;
    flex-direction: column;
}

.pane-head {
    height: 54px;
    display: flex;
    align-items: center;
    margin-left: -1px;
    padding-bottom: 1px;
}

.pane-title {
    color: #217346;
    font-size: 24px;
    width: 53px;
}

.pane-caret {
    border-left-width: 6px;
    border-right-width: 6px;
    border-top-width: 6px;
    margin-right: 9px;
}

.pane-btn {
    width: 92px;
    height: 27px;
    margin-bottom: 6px;
    border: 1px solid #ababab;
    border-right: 0;
    text-align: center;
    line-height: 24px;
    background-color: white;
}

.pane-tip {
    margin: -1px 0 3px;
    line-height: 20px;
    color: #555;
}

.pane-list {
    width: 92px;
    height: 555px;
    border: 1px solid #ababab;
    padding: 7px 0 0 6px;
    position: relative;
}

.thumb-icon {
    margin-left: 1px;
}

.thumb {
    width: 58px;
    height: 36px;
    margin-top: -8px;
    display: flex;
    border-bottom: 2px solid #9a6b40;
    position: relative;
}

.thumb-left {
    width: 8px;
    background-color: #2b3a4d;
    margin-top: 8px;
}

.thumb-main {
    flex: 1;
    background: linear-gradient(#2f8cc7 3px, #e8eef5 3px);
    position: relative;
}

.thumb-main::after {
    content: "";
    position: absolute;
    left: 6px;
    right: 6px;
    top: 9px;
    bottom: 5px;
    background-color: white;
    background-image: repeating-linear-gradient(#ccc 0 1px, transparent 1px 3px);
}

.pane-options {
    width: 54px;
    height: 34px;
    margin-top: 8px;
    border: 1px solid #ababab;
    display: flex;
    align-items: center;
    gap: 6px;
    padding-left: 4px;
    font-size: 15px;
    line-height: 28px;
}

.pane-options .caret {
    border-left-width: 3px;
    border-right-width: 3px;
    border-top-width: 3px;
}

.sheet-wrap {
    flex: 1;
    display: flex;
    flex-direction: column;
    min-width: 0;
}

.sheet-scroll {
    height: 750px;
    display: flex;
    overflow: hidden;
}

.sheet {
    width: 1780px;
    height: 750px;
    flex: none;
    overflow: hidden;
    display: grid;
    grid-template-columns: 36px repeat(22, 80px);
    grid-auto-rows: 21px;
    background-image:
        linear-gradient(to top, #d4d4d4 1px, transparent 1px),
        linear-gradient(to left, #d4d4d4 1px, transparent 1px);
    background-size: 80px 21px;
    background-position: 36px 0;
    border-right: 1px solid #b0b0b0;
}

.ch, .rh {
    background-color: white;
    color: #444;
    font-family: "Liberation Sans", sans-serif;
    font-size: 16px;
    text-align: center;
    line-height: 22px;
    border-right: 1px solid #d4d4d4;
    border-bottom: 1px solid #a6a6a6;
}

.ch.sel, .rh.sel {
    background-color: #e1e1e1;
    color: #217346;
    font-weight: bold;
}

.rh {
    grid-column: 1;
    border-right: 1px solid #a6a6a6;
    border-bottom: 1px solid #d4d4d4;
    font-size: 17px;
}

.corner {
    position: relative;
    border-right: 1px solid #d4d4d4;
}

.corner::after {
    content: "";
    position: absolute;
    right: 3px;
    bottom: 3px;
    border-left: 14px solid transparent;
    border-bottom: 14px solid #dcdcdc;
}

.c {
    position: relative;
    overflow: hidden;
    margin: 0 1px 1px 0;
    padding-left: 3px;
    font-family: "Liberation Sans", "Noto Sans CJK SC", sans-serif;
    font-size: 17px;
    line-height: 22px;
    color: #111;
}

.c.n, .c.d {
    font-size: 16.4px;
    line-height: 20px;
}

.c.n::before {
    content: "";
    position: absolute;
    left: 0;
    top: 0;
    border-top: 6px solid #107c10;
    border-right: 6px solid transparent;
}

.c.active {
    overflow: visible;
    z-index: 1;
    box-shadow: 0 0 0 2px #217346;
}

.c.active::after {
    content: "";
    position: absolute;
    right: -5px;
    bottom: -5px;
    width: 7px;
    height: 7px;
    background-color: #217346;
    border: 1px solid white;
}

.vscroll {
    flex: 1;
    display: flex;
    flex-direction: column;
    justify-content: space-between;
    margin: 1px 3px 0;
    border-left: 1px solid #b0b0b0;
    border-right: 1px solid #b0b0b0;
}

.vs-btn {
    height: 19px;
    display: flex;
    align-items: center;
    justify-content: center;
    border-top: 1px solid #d4d4d4;
    border-bottom: 1px solid #b0b0b0;
}

.vs-btn .caret-up {
    border-left-width: 5px;
    border-right-width: 5px;
    border-bottom: 5px solid #777;
}

.vs-btn .caret {
    border-left-width: 5px;
    border-right-width: 5px;
    border-top: 5px solid #777;
}

.sheet-tabs {
    height: 29px;
    flex: none;
    display: flex;
    align-items: flex-start;
    background-color: #f3f3f3;
    border-top: 1px solid #ababab;
    border-left: 1px solid #d4d4d4;
}

.nav-arrow {
    margin-top: 9px;
    width: 0;
    height: 0;
    border-top: 5px solid transparent;
    border-bottom: 5px solid transparent;
}

.nav-arrow.left {
    margin-left: 27px;
    border-right: 5px solid #bbb;
}

.nav-arrow.right {
    margin-left: 23px;
    border-left: 5px solid #bbb;
}

.sheet-tab {
    margin-left: 43px;
    width: 82px;
    height: 27px;
    margin-top: -1px;
    background-color: white;
    border: 1px solid #ababab;
    border-top-color: white;
    border-bottom: 2px solid #217346;
    color: #217346;
    text-align: center;
    font-family: "Noto Sans", sans-serif;
    font-size: 16px;
    line-height: 21px;
}

.add-sheet {
    margin: 3px 0 0 34px;
}

.tab-dots {
    width: 3px;
    height: 11px;
    margin: 8px 0 0 841px;
    background: radial-gradient(circle, #999 1px, transparent 1.2px) top / 3px 4px repeat-y;
}

.hscroll-left {
    width: 18px;
    height: 19px;
    margin: 4px 0 0 15px;
    border: 1px solid #ababab;
    display: flex;
    align-items: center;
    justify-content: center;
    background-color: white;
}

.hscroll-left i {
    border-top: 5px solid transparent;
    border-bottom: 5px solid transparent;
    border-right: 5px solid #555;
}

.hscroll-thumb {
    flex: 1;
    height: 19px;
    margin-top: 4px;
    background-color: white;
    border: 1px solid #ababab;
}

.side-handle {
    position: absolute;
    right: 0;
    top: 585px;
    width: 13px;
    height: 74px;
    border-radius: 5px 0 0 5px;
    background:
        repeating-linear-gradient(#2c3038 0 1px, transparent 1px 3px) 4px 0 / 5px 100% no-repeat,
        #4c5264;
}

.side-handle::after {
    content: "";
    position: absolute;
    left: 4px;
    bottom: 8px;
    width: 5px;
    height: 20px;
    background: repeating-linear-gradient(#57d08a 0 2px, transparent 2px 3px);
}

/* status bar */
.status {
    height: 27px;
    flex: none;
    display: flex;
    align-items: center;
    justify-content: space-between;
    background-color: #217346;
    color: white;
    padding-left: 6px;
    line-height: 24px;
}

.views {
    display: flex;
    align-items: center;
    height: 100%;
    width: 346px;
}

.view {
    width: 41px;
    height: 100%;
    display: flex;
    align-items: center;
    justify-content: center;
}

.view.on {
    background-color: #0f5c30;
}

.zoom-dash {
    width: 24px;
    height: 2px;
    margin-left: 9px;
    background-color: white;
}

/* taskbar */
.taskbar {
    height: 50px;
    flex: none;
    display: flex;
    align-items: center;
    background-color: #421a0c;
}

.start {
    width: 60px;
    display: flex;
    justify-content: center;
}

.search {
    width: 430px;
    height: 50px;
    display: flex;
    align-items: center;
    padding: 0 18px 0 11px;
    background-color: #f4f0ef;
}

.cortana {
    width: 28px;
    height: 28px;
    border: 4px solid #111;
    border-radius: 50%;
    flex: none;
}

.search-text {
    flex: 1;
    margin-left: 11px;
    color: #333;
    font-size: 19.2px;
}

.task-view {
    width: 60px;
    display: flex;
    justify-content: center;
}

.task-sep {
    width: 1px;
    height: 32px;
    margin-left: 7px;
    background-color: #6d4a3d;
}

.apps {
    display: flex;
    height: 100%;
    margin-left: 15px;
}

.app {
    width: 61.8px;
    height: 100%;
    display: flex;
    align-items: center;
    justify-content: center;
    position: relative;
}

.app.run::after, .app.run-split::after {
    content: "";
    position: absolute;
    left: 6px;
    right: 6px;
    bottom: 0;
    height: 3px;
    background-color: #fbb9a4;
}

.app.run-split::after {
    background: linear-gradient(to right, #fbb9a4 80%, #b98a7a 80%);
}

.app.current {
    background-color: #843a1e;
    box-shadow: inset 0 -3px 0 #fbb9a4;
}

.youdao {
    width: 30px;
    height: 38px;
    border-radius: 5px;
    background-color: #e3231b;
    color: white;
    font-size: 13px;
    line-height: 36px;
    text-align: center;
    letter-spacing: -1px;
}

.w-mark, .x-mark {
    font-family: "Liberation Sans", sans-serif;
    font-size: 15px;
    font-weight: bold;
    fill: white;
}

.tray {
    flex: 1;
    display: flex;
    align-items: center;
    justify-content: flex-end;
    color: white;
    padding-right: 31px;
}

.tray > svg {
    margin-right: 13px;
}

.tray > svg.people {
    margin-right: 27px;
}

.tray-lang {
    font-size: 16px;
    margin-right: 14px;
}

.clock {
    text-align: center;
    font-size: 17px;
    line-height: 24px;
    font-family: "Liberation Sans", sans-serif;
    margin-right: 24px;
    color: #f3ece9;
}

.tray > svg.notify {
    margin: 0;
}

/* floating things */
.toast {
    position: absolute;
    left: 1472px;
    top: 879px;
    width: 427px;
    height: 128px;
    background: linear-gradient(#e6f5ef, white 45%);
    border: 1px solid #777;
    border-top: 4px solid #0fa06b;
    box-shadow: 0 0 8px rgba(0, 0, 0, 0.45);
    padding: 0 15px 0 10px;
}

.toast-head {
    height: 30px;
    display: flex;
    align-items: center;
    gap: 17px;
    font-size: 17px;
    color: #444;
}

.toast-head span {
    flex: 1;
}

.toast-body {
    display: flex;
    align-items: flex-start;
}

.toast-body > svg {
    margin-top: 12px;
    margin-left: 3px;
}

.toast-text {
    margin-left: 15px;
    padding-top: 9px;
    width: 248px;
}

.toast-msg {
    font-size: 17px;
    color: #333;
    line-height: 28px;
}

.toast-file {
    display: flex;
    align-items: center;
    gap: 7px;
    margin-top: 7px;
    color: #888;
    font-family: "Liberation Sans", "Noto Sans CJK SC", sans-serif;
    font-size: 14.3px;
}

.toast-btn {
    width: 94px;
    height: 31px;
    margin-top: 51px;
    background-color: #0cbf76;
    color: #e4fff3;
    font-size: 15px;
    line-height: 29px;
    text-align: center;
}

.ime {
    position: absolute;
    left: 1730px;
    top: 1003px;
    width: 190px;
    height: 28px;
    padding: 0 8px 0 17px;
    display: flex;
    align-items: center;
    justify-content: space-between;
    background-color: white;
    color: black;
    font-size: 19px;
    font-weight: bold;
}

.ime::before {
    content: "";
    position: absolute;
    left: 5px;
    top: 3px;
    width: 3px;
    height: 22px;
    background: radial-gradient(circle, #aaa 1px, transparent 1.2px) top / 3px 4px repeat-y;
}

.ime-m {
    width: 20px;
    height: 20px;
    border: 1px solid #999;
    font-family: "Liberation Sans", sans-serif;
    font-size: 15px;
    font-weight: normal;
    line-height: 18px;
    text-align: center;
}

.ime-more {
    width: 6px;
    height: 12px;
    border-top: 2px solid black;
    border-bottom: 2px solid black;
}

.watermark {
    position: absolute;
    left: 1667px;
    top: 1050px;
    font-family: "Liberation Sans", sans-serif;
    font-size: 15.9px;
    color: rgba(220, 220, 220, 0.62);
}
```
